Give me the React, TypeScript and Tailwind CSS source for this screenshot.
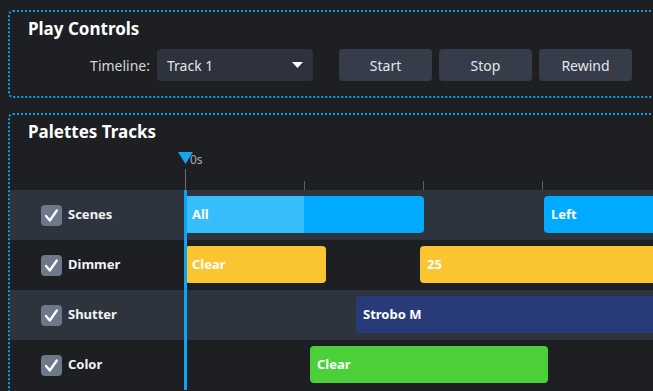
const font = { fontFamily: '"Noto Sans", "Open Sans", sans-serif' };

type Clip = { label: string; left: number; width: number; color: string; done?: number };

const tracks: { name: string; striped: boolean; clips: Clip[] }[] = [
  {
    name: 'Scenes',
    striped: true,
    clips: [
      { label: 'All', left: 0, width: 239, color: '#00aaff', done: 119 },
      { label: 'Left', left: 359, width: 200, color: '#00aaff' },
    ],
  },
  {
    name: 'Dimmer',
    striped: false,
    clips: [
      { label: 'Clear', left: 0, width: 141, color: '#fbc531' },
      { label: '25', left: 235, width: 300, color: '#fbc531' },
    ],
  },
  {
    name: 'Shutter',
    striped: true,
    clips: [{ label: 'Strobo M', left: 171, width: 400, color: '#283b78' }],
  },
  {
    name: 'Color',
    striped: false,
    clips: [{ label: 'Clear', left: 125, width: 238, color: '#4bd03a' }],
  },
];

function Check() {
  return (
    <div className="w-[21px] h-[21px] rounded-[4px] bg-[#6d7889] flex items-center justify-center shrink-0">
      <svg width="21" height="21" viewBox="0 0 21 21">
        <path d="M5 11 L8.8 15.5 L15.8 5.5" fill="none" stroke="white" strokeWidth="2.3" strokeLinecap="round" strokeLinejoin="round" />
      </svg>
    </div>
  );
}

export default function App() {
  return (
    <div className="w-[653px] h-[391px] overflow-hidden bg-[#1e1f23] text-white" style={font}>
      {/* play controls */}
      <div className="ml-[8px] mt-[10px] w-[700px] h-[88px] border-2 border-dotted border-[#0f9de6] rounded-[5px] pt-[5px]">
        <div className="pl-[18px] text-[17px] leading-[24px] font-bold">Play Controls</div>
        <div className="mt-[8px] flex items-center h-[32px] text-[14px]">
          <div className="w-[140px] text-right text-[#d4d6da]">Timeline:</div>
          <div className="ml-[7px] w-[156px] h-[32px] rounded-[4px] bg-[#2d323c] flex items-center justify-between pl-[10px] pr-[10px] text-[#e4e6ea]">
            <span>Track 1</span>
            <svg width="11" height="6" viewBox="0 0 11 6">
              <path d="M0 0 H11 L5.5 6 Z" fill="white" />
            </svg>
          </div>
          <div className="ml-[26px] flex gap-[7px]">
            {['Start', 'Stop', 'Rewind'].map((b) => (
              <div key={b} className="w-[93px] h-[32px] rounded-[4px] bg-[#363c4a] flex items-center justify-center text-[#e4e6ea]">
                {b}
              </div>
            ))}
          </div>
        </div>
      </div>

      {/* palettes tracks */}
      <div className="ml-[8px] mt-[15px] w-[700px] h-[320px] border-2 border-dotted border-[#0f9de6] rounded-[5px] pt-[5px]">
        <div className="pl-[18px] text-[17px] leading-[24px] font-bold">Palettes Tracks</div>

        <div className="flex h-[46px]">
          <div className="w-[175px] shrink-0" />
          <div className="relative flex-1">
            <svg className="absolute left-[-7px] top-[8px]" width="15" height="12" viewBox="0 0 15 12">
              <path d="M0 0 H15 L7.5 12 Z" fill="#14a4f2" />
            </svg>
            <span className="absolute left-[5px] top-[9px] text-[12px] leading-[14px] text-[#a9abb0]">0s</span>
            <div className="absolute left-0 top-[25px] w-px h-[21px] bg-[#6b6e75]" />
            <div className="absolute left-[119px] top-[37px] w-px h-[9px] bg-[#5d6067]" />
            <div className="absolute left-[238px] top-[37px] w-px h-[9px] bg-[#5d6067]" />
            <div className="absolute left-[357px] top-[37px] w-px h-[9px] bg-[#5d6067]" />
          </div>
        </div>

        <div className="relative">
          {tracks.map((t) => (
            <div key={t.name} className={`flex h-[50px] ${t.striped ? 'bg-[#2e343e]' : 'bg-[#1e1f23]'}`}>
              <div className="w-[175px] shrink-0 flex items-center pl-[31px] gap-[6px]">
                <Check />
                <span className="text-[13px] font-bold text-[#f2f3f5]">{t.name}</span>
              </div>
              <div className="relative flex-1">
                {t.clips.map((c) => (
                  <div
                    key={c.label + c.left}
                    className="absolute top-[6px] h-[37px] rounded-[4px] overflow-hidden flex items-center"
                    style={{ left: c.left, width: c.width, backgroundColor: c.color }}
                  >
                    {c.done ? (
                      <div className="absolute left-0 top-0 bottom-0 bg-[#36bdfb]" style={{ width: c.done }} />
                    ) : null}
                    <span className="relative pl-[7px] text-[13px] font-bold text-white">{c.label}</span>
                  </div>
                ))}
              </div>
            </div>
          ))}
          <div className="absolute left-[174px] top-0 bottom-0 w-[3px] bg-[#0aa6f5]" />
        </div>
      </div>
    </div>
  );
}
